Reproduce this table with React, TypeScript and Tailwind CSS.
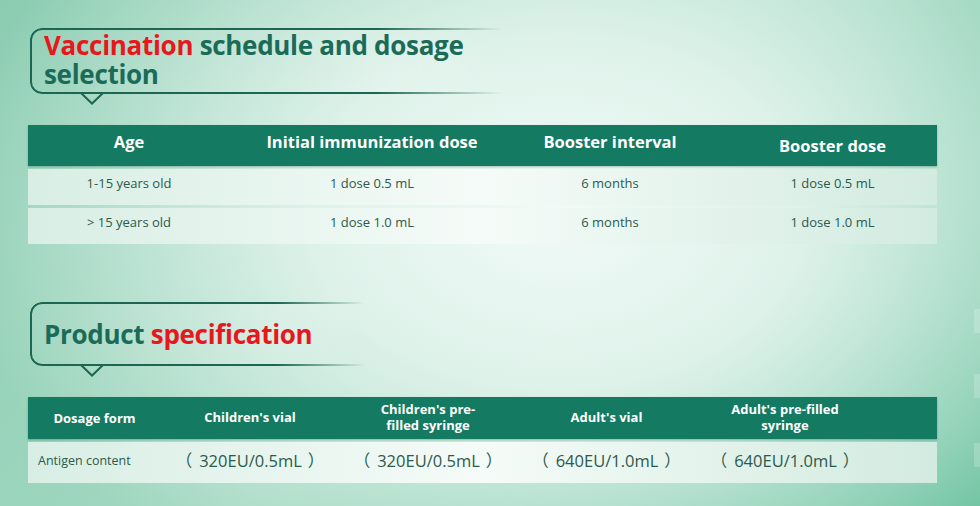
import React from "react";

const font = { fontFamily: "'Open Sans', 'Noto Sans CJK SC', sans-serif" };

function TitleBox({ width, children }: { width: number; children: React.ReactNode }) {
  return (
    <div className="relative" style={{ width }}>
      {/* frame, faded to the right */}
      <div className="absolute inset-0 rounded-[12px] border-2 border-[#1c6653] [mask-image:linear-gradient(to_right,black_72%,transparent_98%)] bg-linear-to-r from-transparent via-white/10 to-white/30"></div>
      <svg className="absolute left-[50px] -bottom-[11px]" width="24" height="13" viewBox="0 0 24 13">
        <path d="M1 1 L12 11.5 L23 1" fill="none" stroke="#1c6653" strokeWidth="2" />
      </svg>
      <div className="relative">{children}</div>
    </div>
  );
}

function Amount({ text }: { text: string }) {
  return (
    <div className="flex items-center justify-center pb-[2px] text-[16.5px]">
      <span className="mr-[7px]">（</span>
      {text}
      <span className="ml-[6px]">）</span>
    </div>
  );
}

const schedule = [
  ["1-15 years old", "1 dose 0.5 mL", "6 months", "1 dose 0.5 mL"],
  ["> 15 years old", "1 dose 1.0 mL", "6 months", "1 dose 1.0 mL"],
];

export default function App() {
  return (
    <div
      className="w-[980px] h-[506px] overflow-hidden relative bg-[radial-gradient(ellipse_62%_85%_at_57%_42%,#f1faf7_0%,#def2ea_40%,rgba(140,205,178,0)_100%),linear-gradient(135deg,#8ccdb2_0%,#a2d8c1_50%,#6ec3a1_100%)] text-[#1a6b57]"
      style={font}
    >
      {/* faint blocks on right edge */}
      <div className="absolute right-0 top-[309px] w-[6px] h-[24px] bg-white/20"></div>
      <div className="absolute right-0 top-[374px] w-[6px] h-[24px] bg-white/20"></div>
      <div className="absolute right-0 top-[443px] w-[6px] h-[24px] bg-white/20"></div>

      <div className="pl-[28px] pt-[28px]">
        <div className="pl-[2px]">
          <TitleBox width={482}>
            <h2 className="pl-[14px] pt-[3px] pb-[5px] text-[26px] leading-[29px] font-bold tracking-[-0.3px]">
              <span className="text-[#e8171b]">Vaccination</span> schedule and dosage
              <br />
              selection
            </h2>
          </TitleBox>
        </div>

        {/* schedule table */}
        <div className="mt-[31px] w-[909px]">
          <div className="grid grid-cols-[202px_284px_192px_231px] h-[41px] bg-[#147a61] text-white font-bold text-[16.5px] shadow-[0_1px_2px_rgba(0,60,40,0.3)]">
            <div className="flex items-center justify-center pb-[6px]">Age</div>
            <div className="flex items-center justify-center pb-[6px]">Initial immunization dose</div>
            <div className="flex items-center justify-center pb-[6px]">Booster interval</div>
            <div className="flex items-center justify-center pl-[22px] pt-[1px]">Booster dose</div>
          </div>
          {schedule.map((row, i) => (
            <div
              key={i}
              className="grid grid-cols-[202px_284px_192px_231px] h-[36px] mt-[3px] text-[13px] text-[#2c5a4c] bg-linear-to-r from-[#d8eee5] via-[#f5fbf8] to-[#d2ebe0]"
            >
              <div className="flex items-center justify-center pb-[6px]">{row[0]}</div>
              <div className="flex items-center justify-center pb-[6px]">{row[1]}</div>
              <div className="flex items-center justify-center pb-[6px]">{row[2]}</div>
              <div className="flex items-center justify-center pb-[6px] pl-[22px]">{row[3]}</div>
            </div>
          ))}
        </div>

        <div className="pl-[2px] mt-[58px]">
          <TitleBox width={342}>
            <h2 className="pl-[14px] h-[64px] flex items-center text-[26px] font-bold tracking-[-0.3px]">
              Product&nbsp;<span className="text-[#e8171b]">specification</span>
            </h2>
          </TitleBox>
        </div>

        {/* spec table */}
        <div className="mt-[31px] w-[909px]">
          <div className="grid grid-cols-[133px_178px_178px_179px_178px_1fr] h-[42px] bg-[#147a61] text-white font-bold text-[13px] leading-[16px] text-center shadow-[0_1px_2px_rgba(0,60,40,0.3)]">
            <div className="flex items-center justify-center">Dosage form</div>
            <div className="flex items-center justify-center pb-[2px]">Children's vial</div>
            <div className="flex items-center justify-center pb-[2px]">
              Children's pre-
              <br />
              filled syringe
            </div>
            <div className="flex items-center justify-center pb-[2px]">Adult's vial</div>
            <div className="flex items-center justify-center pb-[2px]">
              Adult's pre-filled
              <br />
              syringe
            </div>
            <div></div>
          </div>
          <div className="grid grid-cols-[133px_178px_178px_179px_178px_1fr] h-[41px] mt-[3px] text-[#2c5a4c] bg-linear-to-r from-[#d8eee5] via-[#f5fbf8] to-[#d2ebe0]">
            <div className="flex items-center pl-[10px] pb-[2px] text-[12.5px]">Antigen content</div>
            <Amount text="320EU/0.5mL" />
            <Amount text="320EU/0.5mL" />
            <Amount text="640EU/1.0mL" />
            <Amount text="640EU/1.0mL" />
            <div></div>
          </div>
        </div>
      </div>
    </div>
  );
}
